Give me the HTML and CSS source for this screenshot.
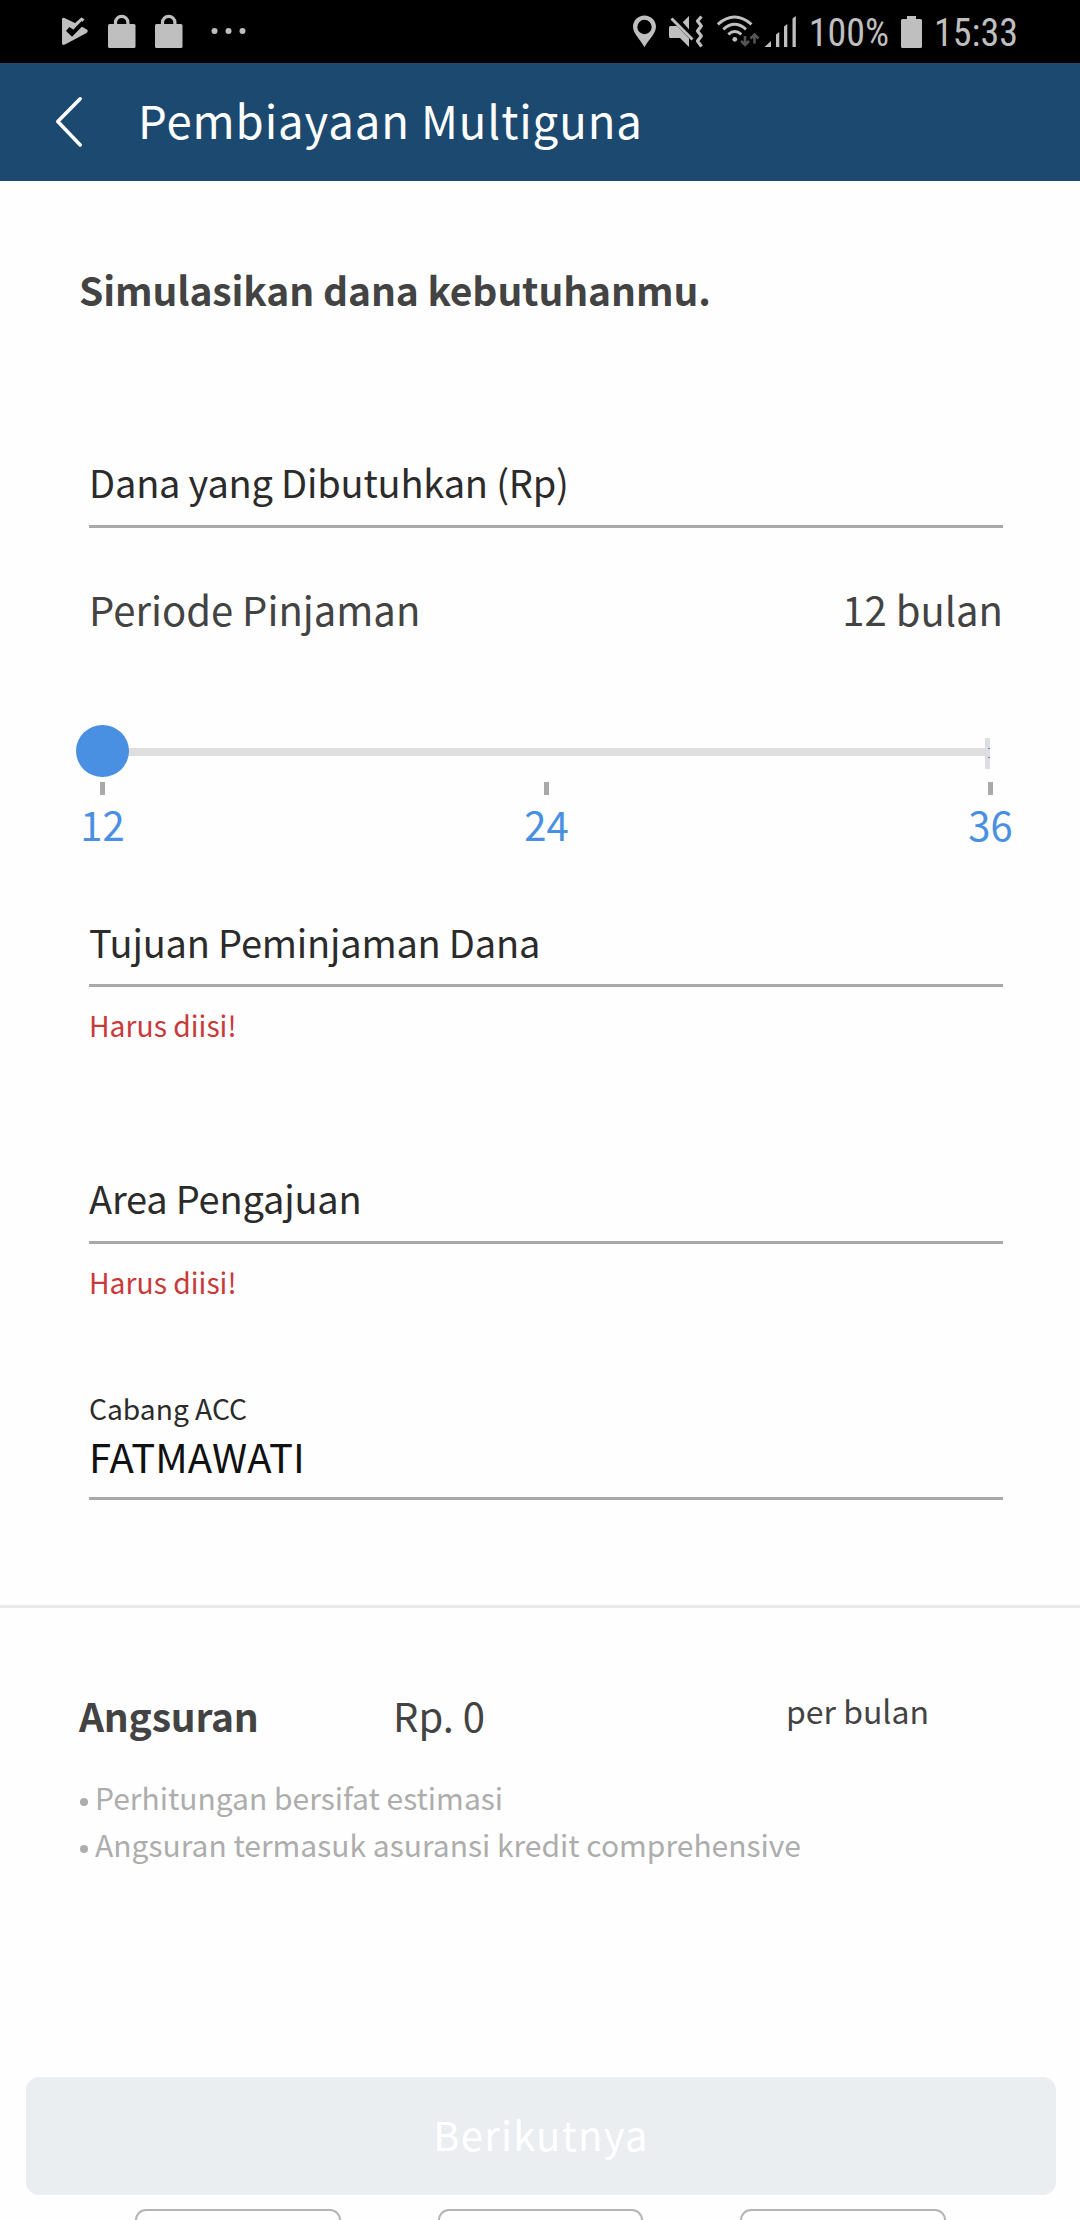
FILE: index.html
```html
<!DOCTYPE html>
<html lang="id">
<head>
<meta charset="utf-8">
<title>Pembiayaan Multiguna</title>
<link rel="stylesheet" href="styles.css">
</head>
<body>
<div class="status">
  <svg class="status-left" width="200" height="63" viewBox="50 0 200 63" fill="#bfbfbf">
    <path d="M62 19.5q0-2.600 2.400-1.500L76 23.500 82 17.500 84.500 19.500 74.500 30.500 69.500 27 66.500 30.500 72 36 81.500 26.500 86.500 29.300Q89 31 86.500 33L65 44.600Q62 46 62 43z"/>
    <path d="M67.500 29.500 72 34 83 22.500" fill="none" stroke="#000" stroke-width="4"/>
    <path d="M74.500 25.500 82.300 18.500" fill="none" stroke="#bfbfbf" stroke-width="3"/>
    <g id="bag">
      <rect x="108" y="24" width="27.500" height="24" rx="1.500"/>
      <path d="M115.500 25v-2.500a6.200 6.200 0 0 1 12.400 0V25" fill="none" stroke="#bfbfbf" stroke-width="3.200"/>
    </g>
    <use href="#bag" x="47"/>
    <circle cx="214.500" cy="31" r="3"/><circle cx="228.500" cy="31" r="3"/><circle cx="242.500" cy="31" r="3"/>
  </svg>
  <div class="status-right">
    <svg width="170" height="63" viewBox="630 0 170 63" fill="#bfbfbf">
      <path fill-rule="evenodd" d="M644.500 15.500c6.500 0 11.500 5 11.500 11.300 0 7-7.500 13-11.500 20.500-4-7.500-11.500-13.500-11.500-20.500 0-6.300 5-11.300 11.500-11.300zm0 4.300a7.200 7.200 0 1 0 0 14.400 7.200 7.200 0 0 0 0-14.400z"/>
      <path d="M670.500 26H677l12 12.500V47l-9-9h-9.500q-1.500 0-1.500-1.500v-9q0-1.500 1.500-1.500zM689 16v13.500l-6.300-7.200z"/>
      <path d="M671.500 18.500 692.500 39.500" fill="none" stroke="#bfbfbf" stroke-width="3"/>
      <path d="M701.500 16.500l-4 4.500 3.800 5-3.800 5 3.800 5-3.800 5 4 5.500" fill="none" stroke="#bfbfbf" stroke-width="3.200" stroke-linejoin="round"/>
      <g fill="none" stroke="#bfbfbf" stroke-width="3">
        <path d="M717.800 24.300q16.700-14.500 33.700 0"/>
        <path d="M723.300 29.300q11.300-10 22.700 0"/>
        <path d="M728.300 34.300q6.500-5.500 13 0"/>
      </g>
      <circle cx="734.800" cy="39.300" r="2.400"/>
      <path d="M745 36v9m-4-4 4 4 4-4M754.500 43.500V34.500m-4 4 4-4 4 4" fill="none" stroke="#555" stroke-width="2.600"/>
      <path d="M764.500 47l6.500-6v6zM776 34.500l3.300-2.500v15H776zM784 26.500l3.300-2.500v23H784zM792.500 18.500l3.300-2.500v31h-3.300z"/>
    </svg>
    <span class="status-text battery-text">100%</span>
    <svg class="battery" width="21" height="32" viewBox="0 0 21 32" fill="#bfbfbf"><path d="M6 0h9v3h4.500Q21 3 21 4.500v26q0 1.500-1.500 1.500h-18Q0 32 0 30.500v-26Q0 3 1.500 3H6z"/></svg>
    <span class="status-text">15:33</span>
  </div>
</div>
<header class="appbar">
  <svg width="30" height="54" viewBox="54 95 30 54" fill="none" stroke="#fff" stroke-width="3.600" stroke-linecap="round" stroke-linejoin="round"><path d="M80.200 98.800 57.800 121.600 80.200 145"/></svg>
  <h1>Pembiayaan Multiguna</h1>
</header>
<main>
  <section class="form">
    <h2>Simulasikan dana kebutuhanmu.</h2>
    <div class="field amount"><div class="label">Dana yang Dibutuhkan (Rp)</div></div>
    <div class="period"><span>Periode Pinjaman</span><span>12 bulan</span></div>
    <div class="slider"><i class="track"></i><i class="end"></i><i class="thumb"></i></div>
    <div class="scale"><div>12</div><div>24</div><div>36</div></div>
    <div class="field purpose"><div class="label">Tujuan Peminjaman Dana</div></div>
    <p class="error">Harus diisi!</p>
    <div class="field area"><div class="label">Area Pengajuan</div></div>
    <p class="error">Harus diisi!</p>
    <div class="field branch"><div class="caption">Cabang ACC</div><div class="value">FATMAWATI</div></div>
  </section>
  <section class="summary">
    <div class="installment"><strong>Angsuran</strong><span class="price">Rp. 0</span><span class="per">per bulan</span></div>
    <ul class="notes">
      <li>Perhitungan bersifat estimasi</li>
      <li>Angsuran termasuk asuransi kredit comprehensive</li>
    </ul>
  </section>
  <button class="next" disabled>Berikutnya</button>
  <div class="boxes"><i></i><i></i><i></i></div>
</main>
</body>
</html>
```
FILE: styles.css
```css
* { box-sizing: border-box; margin: 0; padding: 0; }
body {
  width: 1080px;
  height: 2220px;
  overflow: hidden;
  background: #fefefe;
  color: #434343;
  font: 40px/60px "Noto Sans CJK SC", "Noto Sans", sans-serif;
}
svg { display: block; flex: none; }
i { display: block; }

.status { display: flex; justify-content: space-between; height: 63px; padding: 0 62px 0 50px; background: #000; }
.status-right { display: flex; align-items: flex-start; }
.status-text { color: #bfbfbf; font: 38px/66px "Roboto Condensed", Roboto, sans-serif; }
.battery-text { margin-left: 9px; }
.battery { margin: 16px 12px 0 12px; }

.appbar { display: flex; height: 118px; padding-left: 54px; background: #1c4970; color: #fff; }
.appbar svg { margin-top: 32px; }
h1 { margin-left: 54px; font-size: 45.5px; font-weight: 400; line-height: 112px; letter-spacing: .9px; }

.form { padding: 78px 77px 105px 89px; border-bottom: 3px solid #ebebeb; }
h2 { margin-left: -10px; font-size: 39px; font-weight: 700; letter-spacing: -.1px; }
.field { border-bottom: 3px solid #a9a9a9; color: #2b2b2b; }
.label { font-size: 38px; letter-spacing: -.2px; }
.amount { margin-top: 133px; padding-bottom: 13px; }
.period { display: flex; justify-content: space-between; margin-top: 51px; }
.slider { position: relative; height: 52px; margin-top: 86px; }
.track { position: absolute; left: 14px; top: 23px; width: 885px; height: 8px; border-radius: 0 4px 4px 0; background: #dedede; }
.end { position: absolute; left: 896px; top: 13px; width: 5px; height: 31px; background: #dedede; }
.end::after { content: ""; position: absolute; right: 0; top: 10px; width: 2px; height: 8px; border: solid #4990e2; border-width: 1px 0; }
.thumb { position: absolute; left: -13px; top: 0; width: 53px; height: 52px; border-radius: 50%; background: #4990e2; }
.scale { display: flex; justify-content: space-between; margin: 5px -18px 0 -17px; color: #4990e2; line-height: 58px; text-align: center; }
.scale div { width: 61px; }
.scale div::before { content: ""; display: block; width: 5px; height: 13px; margin: 0 auto; background: #a9a9a9; }
.purpose { margin-top: 59px; padding-bottom: 12px; }
.error { margin-top: 18px; color: #c83a3a; font-size: 28.3px; line-height: 40px; }
.area { margin-top: 123px; padding-bottom: 13px; }
.branch { margin-top: 86px; padding-bottom: 16px; }
.caption { font-size: 28.2px; line-height: 40px; }
.value { margin-top: 3px; color: #111; line-height: 50px; }

.summary { padding: 77px 79px 209px; }
.installment { display: grid; grid-template-columns: 314px 393px auto; align-items: start; }
.installment strong { font-size: 39px; letter-spacing: -.2px; }
.per { font-size: 32px; line-height: 50px; }
.notes { margin-top: 29px; color: #adadad; font-size: 30px; line-height: 47px; list-style: none; }
.notes li { display: flex; align-items: center; }
.notes li::before { content: ""; width: 8px; height: 8px; margin: 8px 7px 0 1px; border-radius: 50%; background: #adadad; }

.next { display: block; width: 1030px; height: 118px; margin-left: 26px; padding-bottom: 4px; border: 0; border-radius: 13px; background: #eaeef1; color: #fff; font: 40px/114px "Noto Sans CJK SC", "Noto Sans", sans-serif; letter-spacing: 1.3px; }
.boxes { display: flex; gap: 97px; height: 11px; margin: 14px 0 0 135px; overflow: hidden; }
.boxes i { width: 205.500px; height: 60px; border: 2px solid #b5b5b5; border-radius: 11px; }
```
